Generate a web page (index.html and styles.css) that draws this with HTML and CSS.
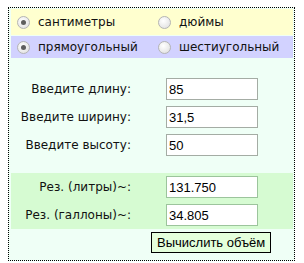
FILE: index.html
```html
<!DOCTYPE html>
<html lang="ru">
<head>
    <meta charset="UTF-8">
    <title>Объём аквариума</title>
    <link rel="stylesheet" href="styles.css">
</head>
<body>
    <div class="calc">
        <div class="opts opts-units">
            <label class="opt"><span class="radio checked"></span>сантиметры</label>
            <label class="opt"><span class="radio"></span>дюймы</label>
        </div>
        <div class="opts opts-shape">
            <label class="opt"><span class="radio checked"></span>прямоугольный</label>
            <label class="opt"><span class="radio"></span>шестиугольный</label>
        </div>

        <div class="fields">
            <div class="field">
                <span class="field-label">Введите длину:</span>
                <input class="num" type="text" value="85">
            </div>
            <div class="field">
                <span class="field-label">Введите ширину:</span>
                <input class="num" type="text" value="31,5">
            </div>
            <div class="field">
                <span class="field-label">Введите высоту:</span>
                <input class="num" type="text" value="50">
            </div>
        </div>

        <div class="fields results">
            <div class="field">
                <span class="field-label">Рез. (литры)~:</span>
                <input class="num out" type="text" value="131.750">
            </div>
            <div class="field">
                <span class="field-label">Рез. (галлоны)~:</span>
                <input class="num out" type="text" value="34.805">
            </div>
        </div>

        <div class="actions">
            <button class="calc-btn">Вычислить объём</button>
        </div>
    </div>
</body>
</html>
```

FILE: styles.css
```css
* {
    margin: 0;
    padding: 0;
    box-sizing: border-box;
}

body {
    background: #fff;
    font-family: "DejaVu Sans", Verdana, sans-serif;
    font-size: 12px;
    color: #111;
}

.calc {
    margin: 7px 0 0 8px;
    width: 287px;
    height: 254px;
    border: 1px dotted #000;
    padding: 1px 1px 0 2px;
    background: #effff6;
}

.opts {
    display: grid;
    grid-template-columns: 141px 1fr;
    align-items: center;
}

.opts-units {
    height: 26px;
    background: #ffffcf;
}

.opts-shape {
    height: 22px;
    margin-top: 1px;
    background: #d2d2ff;
}

.opt {
    display: flex;
    align-items: center;
    font-size: 12px;
}

.radio {
    width: 13px;
    height: 13px;
    margin: 0 8px 0 6px;
    border: 1px solid #b4b4b4;
    border-radius: 50%;
    background: radial-gradient(circle at 40% 35%, #ffffff, #dcdcdc);
    display: flex;
    align-items: center;
    justify-content: center;
}

.radio.checked::after {
    content: "";
    width: 5px;
    height: 5px;
    border-radius: 50%;
    background: #5e5e5e;
}

.fields {
    display: flex;
    flex-direction: column;
    gap: 6px;
    padding-top: 20px;
}

.field {
    display: grid;
    grid-template-columns: 120px 92px;
    column-gap: 35px;
    align-items: center;
}

.field-label {
    text-align: right;
}

.num {
    width: 92px;
    height: 22px;
    border: 1px solid #a4aca4;
    background: #fff;
    padding: 0 2px;
    font-family: "Liberation Sans", Arial, sans-serif;
    font-size: 13px;
    color: #000;
}

.results {
    margin-top: 17px;
    padding: 3px 0;
    background: #d6fbd2;
}

.num.out {
    border-color: #9cc49c;
}

.actions {
    padding: 3px 0 0 140px;
}

.calc-btn {
    height: 21px;
    padding: 0 5px;
    border: 1px solid #000;
    background: #e4ffdc;
    font-family: "Liberation Sans", Arial, sans-serif;
    font-size: 13px;
    color: #000;
}
```
